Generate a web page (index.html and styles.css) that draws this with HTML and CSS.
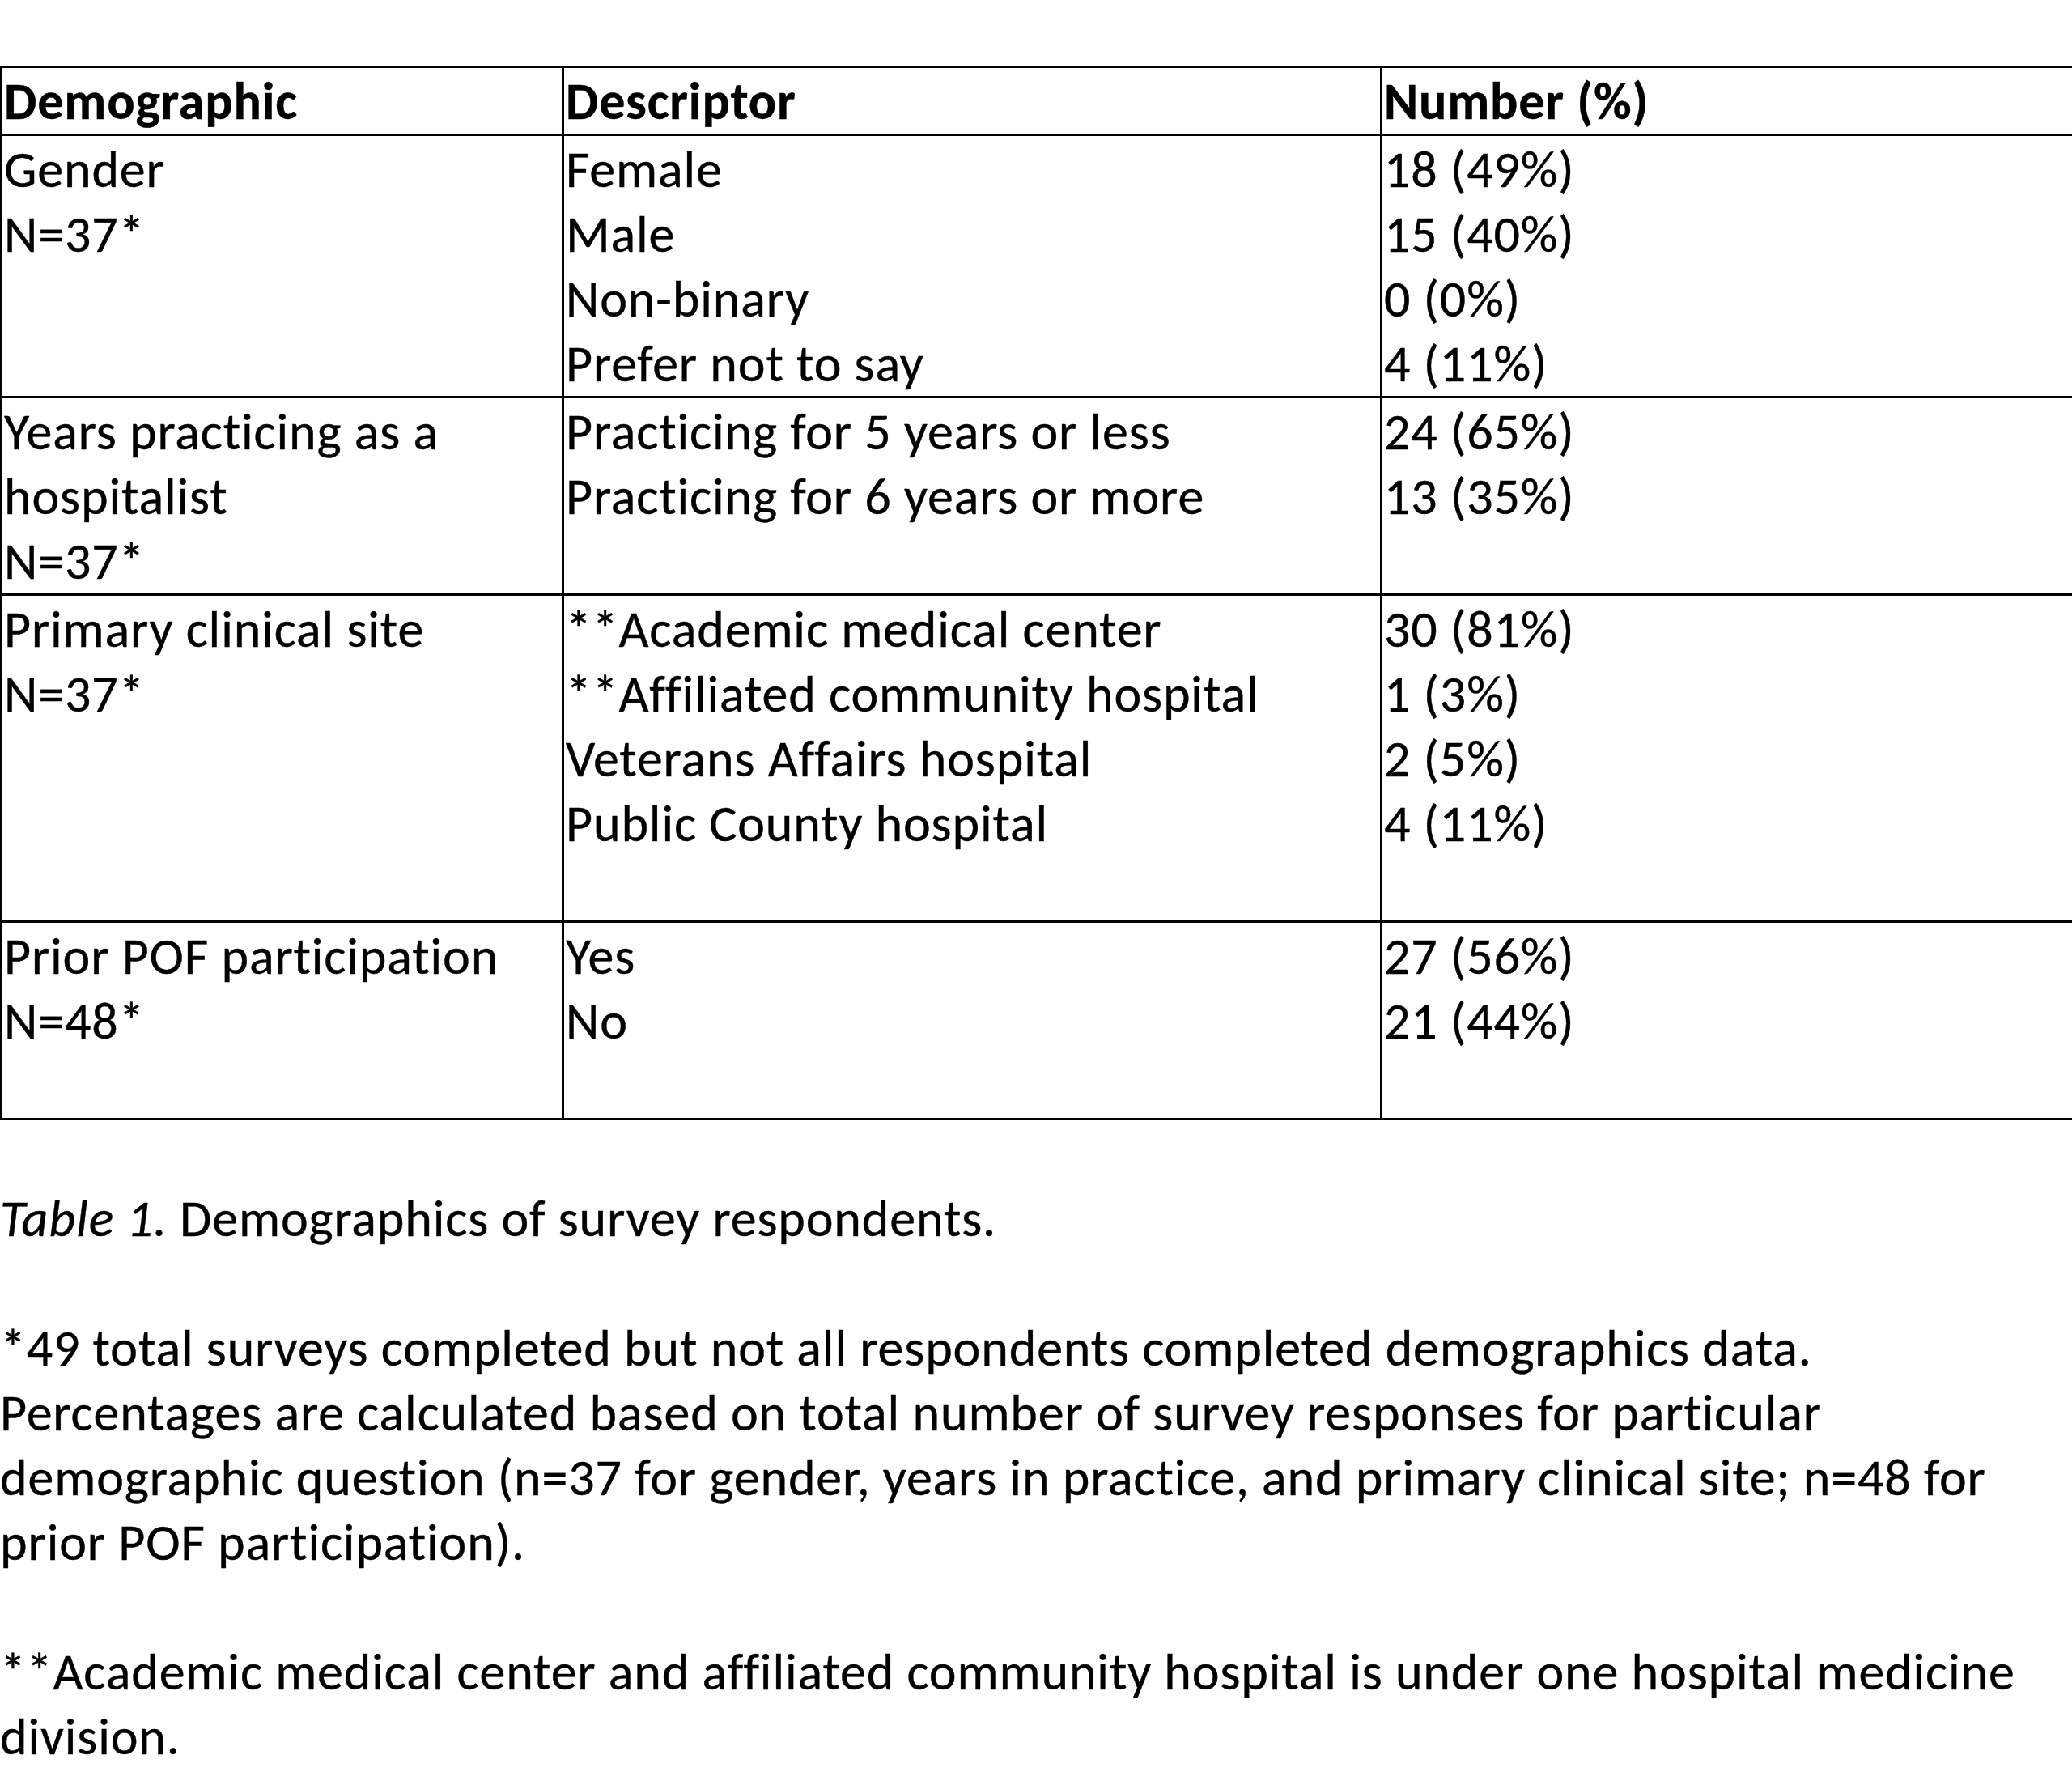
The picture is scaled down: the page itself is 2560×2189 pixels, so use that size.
FILE: index.html
```html
<!DOCTYPE html>
<html lang="en">
<head>
<meta charset="utf-8">
<title>Table 1. Demographics of survey respondents</title>
<link rel="stylesheet" href="styles.css">
</head>
<body>
<table class="demo">
  <colgroup>
    <col class="c1">
    <col class="c2">
    <col class="c3">
  </colgroup>
  <thead>
    <tr>
      <th>Demographic</th>
      <th>Descriptor</th>
      <th>Number (%)</th>
    </tr>
  </thead>
  <tbody>
    <tr>
      <td>Gender<br>N=37*</td>
      <td>Female<br>Male<br>Non-binary<br>Prefer not to say</td>
      <td>18 (49%)<br>15 (40%)<br>0 (0%)<br>4 (11%)</td>
    </tr>
    <tr>
      <td>Years practicing as a<br>hospitalist<br>N=37*</td>
      <td>Practicing for 5 years or less<br>Practicing for 6 years or more</td>
      <td>24 (65%)<br>13 (35%)</td>
    </tr>
    <tr class="spaced">
      <td>Primary clinical site<br>N=37*</td>
      <td>**Academic medical center<br>**Affiliated community hospital<br>Veterans Affairs hospital<br>Public County hospital</td>
      <td>30 (81%)<br>1 (3%)<br>2 (5%)<br>4 (11%)</td>
    </tr>
    <tr class="spaced">
      <td>Prior POF participation<br>N=48*</td>
      <td>Yes<br>No</td>
      <td>27 (56%)<br>21 (44%)</td>
    </tr>
  </tbody>
</table>

<p class="caption"><em>Table 1.</em> Demographics of survey respondents.</p>

<p class="note">*49 total surveys completed but not all respondents completed demographics data.<br>Percentages are calculated based on total number of survey responses for particular<br>demographic question (n=37 for gender, years in practice, and primary clinical site; n=48 for<br>prior POF participation).</p>

<p class="note">**Academic medical center and affiliated community hospital is under one hospital medicine<br>division.</p>
</body>
</html>
```

FILE: styles.css
```css
html, body {
  margin: 0;
  padding: 0;
  background: #ffffff;
}

body {
  padding-top: 81px;
  font-family: "Carlito", "Calibri", "Lato", "Open Sans", "Liberation Sans", sans-serif;
  font-size: 64px;
  letter-spacing: 0.85px;
  line-height: 80px;
  color: #000000;
  -webkit-text-stroke: 0.4px #000000;
}

.demo {
  width: 2560px;
  border-collapse: collapse;
  table-layout: fixed;
}

.demo .c1 { width: 694px; }
.demo .c2 { width: 1011px; }
.demo .c3 { width: 855px; }

.demo th,
.demo td {
  border: 3px solid #000000;
  padding: 1px 0 0 2px;
  text-align: left;
  vertical-align: top;
  white-space: nowrap;
}

.demo th {
  font-weight: bold;
}

.demo .spaced td {
  padding-bottom: 80px;
}

.caption {
  margin: 81px 0 0 0;
}

.note {
  margin: 80px 0 0 0;
}
```
